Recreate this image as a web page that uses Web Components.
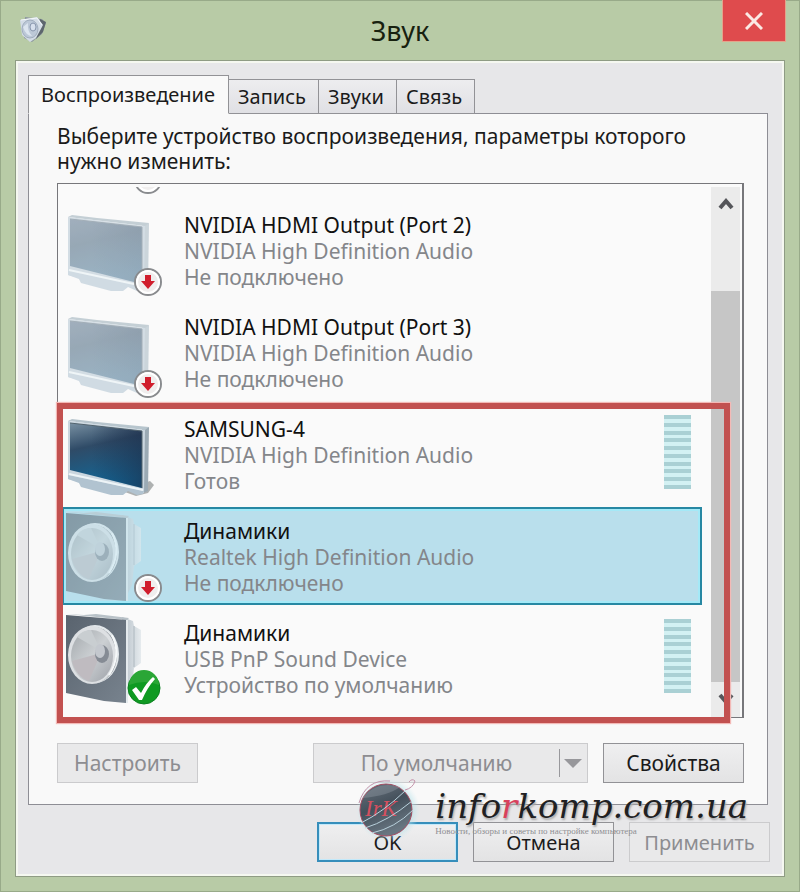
<!DOCTYPE html>
<html lang="ru">
<head>
<meta charset="utf-8">
<title>Звук</title>
<style>
    body {
        margin: 0;
        font-family: "Noto Sans", "Open Sans", sans-serif;
        font-size: 20px;
        line-height: 25px;
        color: #1b1b1b;
    }
</style>
</head>
<body>

<sound-window caption="Звук">
    <tab-strip slot="tabs">
        <tab-item selected>Воспроизведение</tab-item>
        <tab-item>Запись</tab-item>
        <tab-item>Звуки</tab-item>
        <tab-item>Связь</tab-item>
    </tab-strip>

    <playback-panel slot="panel">
        <span slot="hint">Выберите устройство воспроизведения, параметры которого нужно изменить:</span>

        <device-list slot="list">
            <device-item badge="unplugged"></device-item>
            <device-item icon="screen" badge="unplugged">
                <span slot="name">NVIDIA HDMI Output (Port 2)</span>
                <span slot="driver">NVIDIA High Definition Audio</span>
                <span slot="status">Не подключено</span>
            </device-item>
            <device-item icon="screen" badge="unplugged">
                <span slot="name">NVIDIA HDMI Output (Port 3)</span>
                <span slot="driver">NVIDIA High Definition Audio</span>
                <span slot="status">Не подключено</span>
            </device-item>
            <device-item icon="screen" meter>
                <span slot="name">SAMSUNG-4</span>
                <span slot="driver">NVIDIA High Definition Audio</span>
                <span slot="status">Готов</span>
            </device-item>
            <device-item icon="speaker" badge="unplugged" selected>
                <span slot="name">Динамики</span>
                <span slot="driver">Realtek High Definition Audio</span>
                <span slot="status">Не подключено</span>
            </device-item>
            <device-item icon="speaker" badge="default" meter>
                <span slot="name">Динамики</span>
                <span slot="driver">USB PnP Sound Device</span>
                <span slot="status">Устройство по умолчанию</span>
            </device-item>
        </device-list>

        <push-button slot="left" disabled>Настроить</push-button>
        <push-button slot="right" disabled split>По умолчанию</push-button>
        <push-button slot="right">Свойства</push-button>
    </playback-panel>

    <push-button slot="footer" primary>OK</push-button>
    <push-button slot="footer">Отмена</push-button>
    <push-button slot="footer" disabled>Применить</push-button>
    <site-mark slot="mark"></site-mark>
</sound-window>

<script>
class SoundWindow extends HTMLElement {

    constructor() {
        super()
        this.attachShadow({ mode: 'open' })
        this.shadowRoot.innerHTML = `
            ${this._getStyles()}
            ${this._getHTML()}
        `
    }

    connectedCallback() {
        this.shadowRoot.querySelector('h1').textContent = this.getAttribute('caption')
    }

    _getStyles() {
        return `
            <style>
                :host {
                    display: flex;
                    flex-direction: column;
                    box-sizing: border-box;
                    height: 100vh;
                    min-height: 560px;
                    padding: 0 15px 15px;
                    background: #b8cba6;
                    box-shadow: inset 0 0 0 1px #98aa89;
                }
                header {
                    display: grid;
                    grid-template-columns: 62px 1fr 62px;
                    height: 60px;
                }
                .app-icon {
                    margin: 15px 0 0 3px;
                }
                h1 {
                    margin: 0;
                    font-size: 27px;
                    font-weight: 400;
                    line-height: 62px;
                    text-align: center;
                    color: #17210f;
                }
                .close {
                    height: 41px;
                    padding: 0;
                    border: 0;
                    background: #df4b4d;
                    box-shadow: 0 0 0 1px #e4a48b;
                }
                .close svg {
                    display: block;
                    margin: 0 auto;
                }
                main {
                    position: relative;
                    flex: 1;
                    min-height: 0;
                    display: flex;
                    flex-direction: column;
                    padding: 14px 14px 14px 12px;
                    border: 1px solid #8f9c84;
                    background: #e7e7e9;
                    box-shadow: inset 0 0 0 2px #f5f8f0;
                }
                ::slotted([slot="panel"]) {
                    flex: 1;
                    min-height: 0;
                    margin-right: 2px;
                }
                footer {
                    display: flex;
                    justify-content: flex-end;
                    gap: 15px;
                    margin-top: 17px;
                }
                /* lies over the lower buttons */
                ::slotted([slot="mark"]) {
                    position: absolute;
                    right: 36px;
                    bottom: 34px;
                }
            </style>
        `
    }

    _getHTML() {
        return `
            <header>
                <svg class="app-icon" width="30" height="28" viewBox="0 0 30 28" aria-hidden="true">
                    <path d="M7 2 L24 4 L28 8 L24 19 L14 27 L6 23 Z" fill="#8d979f"/>
                    <path d="M22 4 L28 7 L25 17 L18 24 Z" fill="#5d666d"/>
                    <path d="M2 5 L19 2 L25 10 L18 23 L12 27 L4 20 Z" fill="#d3dce6"/>
                    <path d="M3 5 L19 3 L24 10" fill="none" stroke="#f4f7fa"/>
                    <ellipse cx="12" cy="14" rx="8" ry="9" fill="#bcc8d7" stroke="#a0adbd"/>
                    <path d="M5 12 Q8 21 14 21 Q9 16 10 8" fill="#dce5ef"/>
                    <ellipse cx="15" cy="12" rx="3" ry="4" fill="#d7e0ed" stroke="#8896ad"/>
                </svg>
                <h1></h1>
                <button class="close" aria-label="Закрыть">
                    <svg width="18" height="18" viewBox="0 0 18 18">
                        <path d="M1 1 L17 17 M17 1 L1 17" stroke="#fbe9e4" stroke-width="3"/>
                    </svg>
                </button>
            </header>
            <main>
                <slot name="tabs"></slot>
                <slot name="panel"></slot>
                <footer><slot name="footer"></slot></footer>
                <slot name="mark"></slot>
            </main>
        `
    }

}

class TabStrip extends HTMLElement {

    constructor() {
        super()
        this.attachShadow({ mode: 'open' })
        this.shadowRoot.innerHTML = `
            <style>
                :host {
                    display: flex;
                    align-items: flex-end;
                    height: 39px;
                    margin-bottom: -1px;
                    position: relative;
                    z-index: 1;
                }
            </style>
            <slot></slot>
        `
        this.setAttribute('role', 'tablist')
    }

}

class TabItem extends HTMLElement {

    constructor() {
        super()
        this.attachShadow({ mode: 'open' })
        this.shadowRoot.innerHTML = `
            <style>
                :host {
                    display: block;
                }
                button {
                    display: block;
                    height: 35px;
                    padding: 0 12px 0 9px;
                    border: 1px solid #929296;
                    border-left-width: 0;
                    background: linear-gradient(#ededef, #e0e0e4);
                    color: inherit;
                    font: inherit;
                    line-height: 33px;
                }
                :host([selected]) button {
                    height: 39px;
                    padding: 0 13px 0 12px;
                    border-left-width: 1px;
                    border-bottom-color: #f9f9f9;
                    background: #f9f9f9;
                    line-height: 34px;
                }
            </style>
            <button role="tab"><slot></slot></button>
        `
    }

    connectedCallback() {
        this.shadowRoot.querySelector('button').setAttribute('aria-selected', this.hasAttribute('selected'))
    }

}

class PlaybackPanel extends HTMLElement {

    constructor() {
        super()
        this.attachShadow({ mode: 'open' })
        this.shadowRoot.innerHTML = `
            <style>
                :host {
                    display: flex;
                    flex-direction: column;
                    box-sizing: border-box;
                    padding: 10px 23px 21px 28px;
                    border: 1px solid #8e8e95;
                    background: #f9f9f9;
                    font-size: 21px;
                }
                p {
                    margin: 0 0 9px;
                }
                ::slotted([slot="list"]) {
                    flex: 1;
                    min-height: 0;
                }
                .actions {
                    display: flex;
                    gap: 15px;
                    margin-top: 25px;
                }
                .spacer {
                    flex: 1;
                }
            </style>
            <p><slot name="hint"></slot></p>
            <slot name="list"></slot>
            <div class="actions">
                <slot name="left"></slot>
                <div class="spacer"></div>
                <slot name="right"></slot>
            </div>
        `
    }

}

class DeviceList extends HTMLElement {

    constructor() {
        super()
        this.attachShadow({ mode: 'open' })
        this.shadowRoot.innerHTML = `
            <style>
                :host {
                    position: relative;
                    display: flex;
                    box-sizing: border-box;
                    border: 1px solid #77777b;
                    border-right-width: 2px;
                    background: #fafafa;
                }
                /* scrolled to its end */
                .rows {
                    flex: 1;
                    display: flex;
                    flex-direction: column;
                    justify-content: flex-end;
                    gap: 4px;
                    padding: 0 9px 10px 4px;
                    margin-top: 3px;
                    overflow: hidden;
                }
                .scroll {
                    display: flex;
                    flex-direction: column;
                    width: 29px;
                    margin: 3px 2px 0 0;
                    background: #ebebeb;
                }
                .scroll svg {
                    display: block;
                    margin: 0 auto;
                    height: 35px;
                }
                .track {
                    flex: 1;
                    display: flex;
                    flex-direction: column;
                    justify-content: flex-end;
                }
                .thumb {
                    height: 85%;
                    background: #c6c6c6;
                }
                /* outline drawn over the rows and the scroll bar */
                .frame {
                    position: absolute;
                    top: 219px;
                    right: 12px;
                    bottom: -6px;
                    left: -1px;
                    border: 6px solid #c25150;
                    box-shadow: 0 0 1px 1px #f3b9b6;
                    pointer-events: none;
                }
            </style>
            <div class="rows"><slot></slot></div>
            <div class="scroll" aria-hidden="true">
                <svg width="20" viewBox="0 0 20 35">
                    <path d="M4 21 L10 14 L16 21" fill="none" stroke="#55565a" stroke-width="4"/>
                </svg>
                <div class="track"><div class="thumb"></div></div>
                <svg width="20" viewBox="0 0 20 35">
                    <path d="M4 13 L10 20 L16 13" fill="none" stroke="#55565a" stroke-width="4"/>
                </svg>
            </div>
            <div class="frame"></div>
        `
        this.setAttribute('role', 'listbox')
    }

}

class DeviceItem extends HTMLElement {

    constructor() {
        super()
        this.attachShadow({ mode: 'open' })
    }

    connectedCallback() {
        const icon = this.getAttribute('icon') || ''
        const badge = this.getAttribute('badge') || ''

        this.setAttribute('role', 'option')
        this.shadowRoot.innerHTML = `
            ${this._getStyles()}
            <device-icon kind="${icon}" badge="${badge}"></device-icon>
            <div class="text">
                <div class="name"><slot name="name"></slot></div>
                <slot name="driver"></slot>
                <slot name="status"></slot>
            </div>
            ${this.hasAttribute('meter') ? '<level-meter></level-meter>' : ''}
        `
    }

    _getStyles() {
        return `
            <style>
                :host {
                    flex: none;
                    display: flex;
                    box-sizing: border-box;
                    height: 98px;
                    line-height: 26px;
                }
                :host([selected]) {
                    background: #b9dfec;
                    box-shadow: inset 0 0 0 2px #2788a3, inset 0 0 0 4px #a4e9f7;
                }
                .text {
                    flex: 1;
                    display: flex;
                    flex-direction: column;
                    padding: 11px 0 0 22px;
                    color: #84868a;
                }
                .name {
                    color: #111;
                }
                level-meter {
                    margin: 10px 11px 0 0;
                }
            </style>
        `
    }

}

class DeviceIcon extends HTMLElement {

    constructor() {
        super()
        this.attachShadow({ mode: 'open' })
    }

    connectedCallback() {
        const badge = this.getAttribute('badge')
        const faded = badge === 'unplugged'

        this.shadowRoot.innerHTML = `
            <style>
                :host {
                    display: block;
                    width: 100px;
                }
                svg {
                    display: block;
                }
            </style>
            <svg width="100" height="98" viewBox="0 0 100 98" aria-hidden="true">
                ${this._getPicture(faded)}
                ${this._getBadge(badge)}
            </svg>
        `
    }

    _getPicture(faded) {
        switch (this.getAttribute('kind')) {
            case 'screen':
                return `<g opacity="${faded ? 0.8 : 1}">${this._getScreen(faded)}</g>`
            case 'speaker':
                return `<g opacity="${faded ? 0.55 : 1}">${this._getSpeaker()}</g>`
            default:
                return ''
        }
    }

    _getScreen(faded) {
        return `
            <defs>
                <linearGradient id="glass" x1="0" y1="0" x2="0.25" y2="1">
                    <stop offset="0" stop-color="${faded ? '#8b9dae' : '#7890a2'}"/>
                    <stop offset="0.4" stop-color="${faded ? '#7f94a5' : '#2f4b67'}"/>
                    <stop offset="1" stop-color="${faded ? '#83a3b8' : '#126797'}"/>
                </linearGradient>
                <linearGradient id="dusk" x1="0" y1="0" x2="1" y2="0">
                    <stop offset="0.3" stop-color="#1c2c48" stop-opacity="0"/>
                    <stop offset="1" stop-color="#1c2c48" stop-opacity="${faded ? 0.1 : 0.6}"/>
                </linearGradient>
            </defs>
            ${faded ? '' : '<path d="M60 86 L88 76 L92 80 L86 88 L74 91 Z" fill="#8d9292" opacity="0.7"/>'}
            <path d="M80 24 L87 22 L86 86 L79 89 Z" fill="${faded ? '#c0ccd4' : '#9baab4'}"/>
            <path d="M6 16 L10 14 L35 17 L87 22 L83 25 Z" fill="#b7c5cd"/>
            <path d="M6 16 L83 25 L82 88 L76 89 L66 85 L61 89 L49 89 L19 81 L17 77 L6 74 Z" fill="#cad6df"/>
            <path d="M6 70 L82 86 L81 89 L75 90 L66 86 L61 90 L49 90 L19 82 L17 78 L6 74 Z" fill="${faded ? '#c6d4de' : '#b1c3d0'}"/>
            <path d="M7 69 L81 85" stroke="#edf4f7" stroke-width="2"/>
            <path d="M8 18 L80 26 L80 83 L8 65 Z" fill="url(#glass)"/>
            <path d="M8 18 L80 26 L80 83 L8 65 Z" fill="url(#dusk)"/>
            <path d="M8 18 L80 26 L80 83" fill="none" stroke="${faded ? '#8d9ca8' : '#53646f'}"/>
        `
    }

    _getSpeaker() {
        return `
            <defs>
                <linearGradient id="front" x1="0" y1="0" x2="1" y2="1">
                    <stop offset="0" stop-color="#59636e"/>
                    <stop offset="1" stop-color="#78838e"/>
                </linearGradient>
                <linearGradient id="cone" x1="0" y1="0" x2="1" y2="1">
                    <stop offset="0" stop-color="#a3a8ac"/>
                    <stop offset="0.5" stop-color="#ccd0d3"/>
                    <stop offset="1" stop-color="#9da1a8"/>
                </linearGradient>
                <linearGradient id="magnet" x1="0" y1="0" x2="1" y2="0">
                    <stop offset="0" stop-color="#b5bfc7"/>
                    <stop offset="1" stop-color="#e6ebee"/>
                </linearGradient>
            </defs>
            <path d="M60 8 L71 12 L72 17 L79 21 L79 54 L72 59 L70 78 L64 90 Z" fill="url(#magnet)"/>
            <path d="M72 17 L72 58" stroke="#aeb8bf"/>
            <path d="M4 5 L22 6 L34 5 L67 9 L65 11 Z" fill="#b8c1c7"/>
            <path d="M4 6 L65 11 L64 94 L42 92 L4 84 Z" fill="url(#front)"/>
            <path d="M65 11 L65 94" stroke="#e4eaed" stroke-width="2"/>
            <ellipse cx="33" cy="45" rx="24" ry="29" fill="#e3e8eb"/>
            <ellipse cx="32" cy="46" rx="23" ry="28" fill="#858b92"/>
            <ellipse cx="30" cy="46" rx="24" ry="29" fill="#dde0e3"/>
            <ellipse cx="30" cy="47" rx="21" ry="26" fill="url(#cone)"/>
            <path d="M10 52 L39 44 L27 72 Q14 68 10 52 Z" fill="#bfbbc0"/>
            <path d="M15 28 L39 42 L29 21 Q20 21 15 28 Z" fill="#c9ced1"/>
            <ellipse cx="40" cy="45" rx="7" ry="9" fill="#858b94"/>
            <ellipse cx="38" cy="42" rx="5" ry="7" fill="#c4c8ce"/>
            <path d="M50 26 Q60 46 47 66" fill="none" stroke="#f5f8f9" stroke-width="2"/>
        `
    }

    _getBadge(badge) {
        if (badge === 'unplugged') {
            return `
                <circle cx="86" cy="81" r="13" fill="#f0eeee" stroke="#898b8e" stroke-width="2"/>
                <circle cx="86" cy="81" r="11" fill="none" stroke="#fff" stroke-width="2"/>
                <path d="M83 74 H89 V80 H93 L86 88 L79 80 H83 Z" fill="#d01d2c"/>
            `
        }
        if (badge === 'default') {
            return `
                <circle cx="82" cy="79" r="16" fill="#0f9a22" stroke="#0b8120"/>
                <path d="M67 76 A15 15 0 0 1 97 76 Q83 70 67 76 Z" fill="#2aa636"/>
                <path d="M70 81 L74 78 L79 84 Q84 74 91 68 L93 70 Q85 79 80 91 L77 91 Z" fill="#fff"/>
            `
        }
        return ''
    }

}

class LevelMeter extends HTMLElement {

    constructor() {
        super()
        this.attachShadow({ mode: 'open' })
        this.shadowRoot.innerHTML = `
            <style>
                :host {
                    display: flex;
                    flex-direction: column;
                    justify-content: space-between;
                    width: 27px;
                    height: 74px;
                    background: #d3f1f3;
                }
                i {
                    height: 4px;
                    background: #aad0d4;
                }
            </style>
            ${'<i></i>'.repeat(10)}
        `
    }

}

class PushButton extends HTMLElement {

    constructor() {
        super()
        this.attachShadow({ mode: 'open' })
    }

    connectedCallback() {
        const arrow = `
            <svg width="28" height="28" viewBox="0 0 28 28" aria-hidden="true">
                <path d="M0.5 0 V28" stroke="#98989c"/>
                <path d="M5 10 H23 L14 19 Z" fill="#97979b"/>
            </svg>
        `
        this.shadowRoot.innerHTML = `
            <style>
                :host {
                    display: block;
                    width: 141px;
                }
                :host([split]) {
                    width: 275px;
                }
                button {
                    display: flex;
                    align-items: center;
                    justify-content: center;
                    width: 100%;
                    height: 40px;
                    padding: 0;
                    border: 1px solid #929296;
                    background: linear-gradient(#efeff0, #e3e3e4);
                    color: inherit;
                    font: inherit;
                    white-space: nowrap;
                }
                button:disabled {
                    border-color: #cbcbcd;
                    background: #e9e9ea;
                    color: #8d8d91;
                }
                :host([primary]) button {
                    border: 2px solid #368ebb;
                    box-shadow: inset 0 0 0 1px #c3e9fa;
                }
                .label {
                    flex: 1;
                }
            </style>
            <button ${this.hasAttribute('disabled') ? 'disabled' : ''}>
                <span class="label"><slot></slot></span>
                ${this.hasAttribute('split') ? arrow : ''}
            </button>
        `
    }

}

class SiteMark extends HTMLElement {

    constructor() {
        super()
        this.attachShadow({ mode: 'open' })
        this.shadowRoot.innerHTML = `
            <style>
                :host {
                    display: flex;
                    align-items: flex-start;
                    gap: 13px;
                    pointer-events: none;
                }
                .site {
                    padding-top: 8px;
                    font: italic 34px/40px "DejaVu Serif", serif;
                    color: #202022;
                    text-shadow: 1px 2px 2px #a8a8a8;
                }
                .site b {
                    font-weight: 400;
                    color: #d8415c;
                }
                .motto {
                    font: 9px/10px "Liberation Serif", serif;
                    color: #8f8f93;
                }
            </style>
            <svg width="70" height="64" viewBox="0 0 70 64" aria-hidden="true">
                <defs>
                    <radialGradient id="halo">
                        <stop offset="0.7" stop-color="#a9dde5" stop-opacity="0.7"/>
                        <stop offset="1" stop-color="#cdeaf0" stop-opacity="0"/>
                    </radialGradient>
                    <linearGradient id="ball" x1="0" y1="0" x2="0.4" y2="1">
                        <stop offset="0" stop-color="#68727d"/>
                        <stop offset="0.5" stop-color="#44505b"/>
                        <stop offset="1" stop-color="#687681"/>
                    </linearGradient>
                </defs>
                <circle cx="36" cy="32" r="32" fill="url(#halo)"/>
                <circle cx="34" cy="32" r="26" fill="url(#ball)" stroke="#a54c61"/>
                <path d="M10 20 Q25 2 48 9 Q36 18 10 20 Z" fill="#929ca5" opacity="0.4"/>
                <text x="13" y="38" font-family="Liberation Serif, serif" font-size="23" font-style="italic" fill="#d4505f">IrK</text>
                <path d="M9 45 Q31 34 53 13 M13 50 Q36 43 60 23 M20 55 Q43 50 61 32" fill="none" stroke="#b9d1dc" stroke-width="1"/>
                <path d="M7 25 Q14 1 38 3 M53 12 Q61 10 63 3 Q60 0 57 4" fill="none" stroke="#c493aa"/>
            </svg>
            <div>
                <div class="site">info<b>r</b>komp.com.ua</div>
                <div class="motto">Новости, обзоры и советы по настройке компьютера</div>
            </div>
        `
    }

}

customElements.define('sound-window', SoundWindow)
customElements.define('tab-strip', TabStrip)
customElements.define('tab-item', TabItem)
customElements.define('playback-panel', PlaybackPanel)
customElements.define('device-list', DeviceList)
customElements.define('device-icon', DeviceIcon)
customElements.define('level-meter', LevelMeter)
customElements.define('device-item', DeviceItem)
customElements.define('push-button', PushButton)
customElements.define('site-mark', SiteMark)
</script>
</body>
</html>
